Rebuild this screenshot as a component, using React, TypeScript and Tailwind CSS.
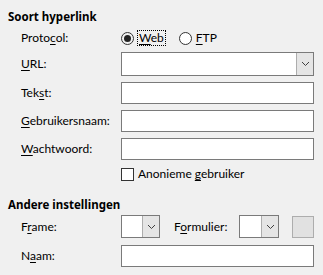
import React from "react";

const font = { fontFamily: 'Lato, "Noto Sans", sans-serif' };
const boldFont = { fontFamily: '"Noto Sans", "Open Sans", sans-serif' };

function U({ children }: { children: React.ReactNode }) {
  return <span className="underline underline-offset-[2px] decoration-[1px]">{children}</span>;
}

function Chevron() {
  return (
    <svg width="9" height="6" viewBox="0 0 9 6" className="block">
      <path d="M1 1 L4.5 4.5 L8 1" fill="none" stroke="#404040" strokeWidth="1" />
    </svg>
  );
}

function Combo({ w, h }: { w: string; h: string }) {
  return (
    <div className={`${w} ${h} flex border border-[#7a7a7a] bg-white`}>
      <div className="flex-1" />
      <div className="w-[17px] h-full bg-[#e5e5e5] border-l border-[#adadad] flex items-center justify-center">
        <Chevron />
      </div>
    </div>
  );
}

function Label({ children }: { children: React.ReactNode }) {
  return <div className="w-[121px] shrink-0 pl-[21px] text-[12px] leading-[16px] text-black">{children}</div>;
}

function Input() {
  return <div className="w-[193px] h-[22px] border border-[#7a7a7a] bg-white" />;
}

export default function App() {
  return (
    <div className="w-[323px] h-[275px] bg-[#f0f0f0] overflow-hidden flex flex-col text-black" style={font}>
      <div className="mt-[9px] pl-[8px] h-[16px] leading-[16px] text-[11.5px] font-bold" style={boldFont}>
        Soort hyperlink
      </div>

      <div className="mt-[2px] h-[22px] flex items-center">
        <Label>
          Proto<U>c</U>ol:
        </Label>
        <div className="flex items-center">
          <div className="w-[13px] h-[13px] rounded-full border border-[#333] flex items-center justify-center">
            <div className="w-[7px] h-[7px] rounded-full bg-[#222]" />
          </div>
          <div className="ml-[3px] border border-dotted border-black px-[1px] h-[16px] leading-[14px] text-[12px]">
            <U>W</U>eb
          </div>
          <div className="ml-[13px] w-[13px] h-[13px] rounded-full border border-[#333] bg-white" />
          <div className="ml-[4px] text-[12px] leading-[16px]">
            <U>F</U>TP
          </div>
        </div>
      </div>

      <div className="mt-[3px] h-[24px] flex items-center">
        <Label>
          <U>U</U>RL:
        </Label>
        <Combo w="w-[193px]" h="h-[24px]" />
      </div>

      <div className="mt-[6px] h-[22px] flex items-center">
        <Label>
          Tek<U>s</U>t:
        </Label>
        <Input />
      </div>

      <div className="mt-[6px] h-[22px] flex items-center">
        <Label>
          <U>G</U>ebruikersnaam:
        </Label>
        <Input />
      </div>

      <div className="mt-[6px] h-[22px] flex items-center">
        <Label>
          <U>W</U>achtwoord:
        </Label>
        <Input />
      </div>

      <div className="mt-[7px] h-[14px] flex items-center">
        <div className="w-[121px] shrink-0" />
        <div className="w-[13px] h-[13px] border border-[#333] bg-white" />
        <div className="ml-[4px] text-[12px] leading-[16px]">
          Anonieme <U>g</U>ebruiker
        </div>
      </div>

      <div className="mt-[16px] pl-[8px] h-[16px] leading-[16px] text-[11.5px] font-bold" style={boldFont}>
        Andere instellingen
      </div>

      <div className="mt-[2px] h-[23px] flex items-center">
        <Label>
          F<U>r</U>ame:
        </Label>
        <Combo w="w-[39px]" h="h-[23px]" />
        <div className="ml-[14px] w-[65px] text-[12px] leading-[16px]">
          F<U>o</U>rmulier:
        </div>
        <Combo w="w-[40px]" h="h-[23px]" />
        <div className="ml-[13px] w-[22px] h-[22px] bg-[#e1e1e1] border border-[#adadad]" />
      </div>

      <div className="mt-[7px] h-[22px] flex items-center">
        <Label>
          N<U>a</U>am:
        </Label>
        <Input />
      </div>
    </div>
  );
}
